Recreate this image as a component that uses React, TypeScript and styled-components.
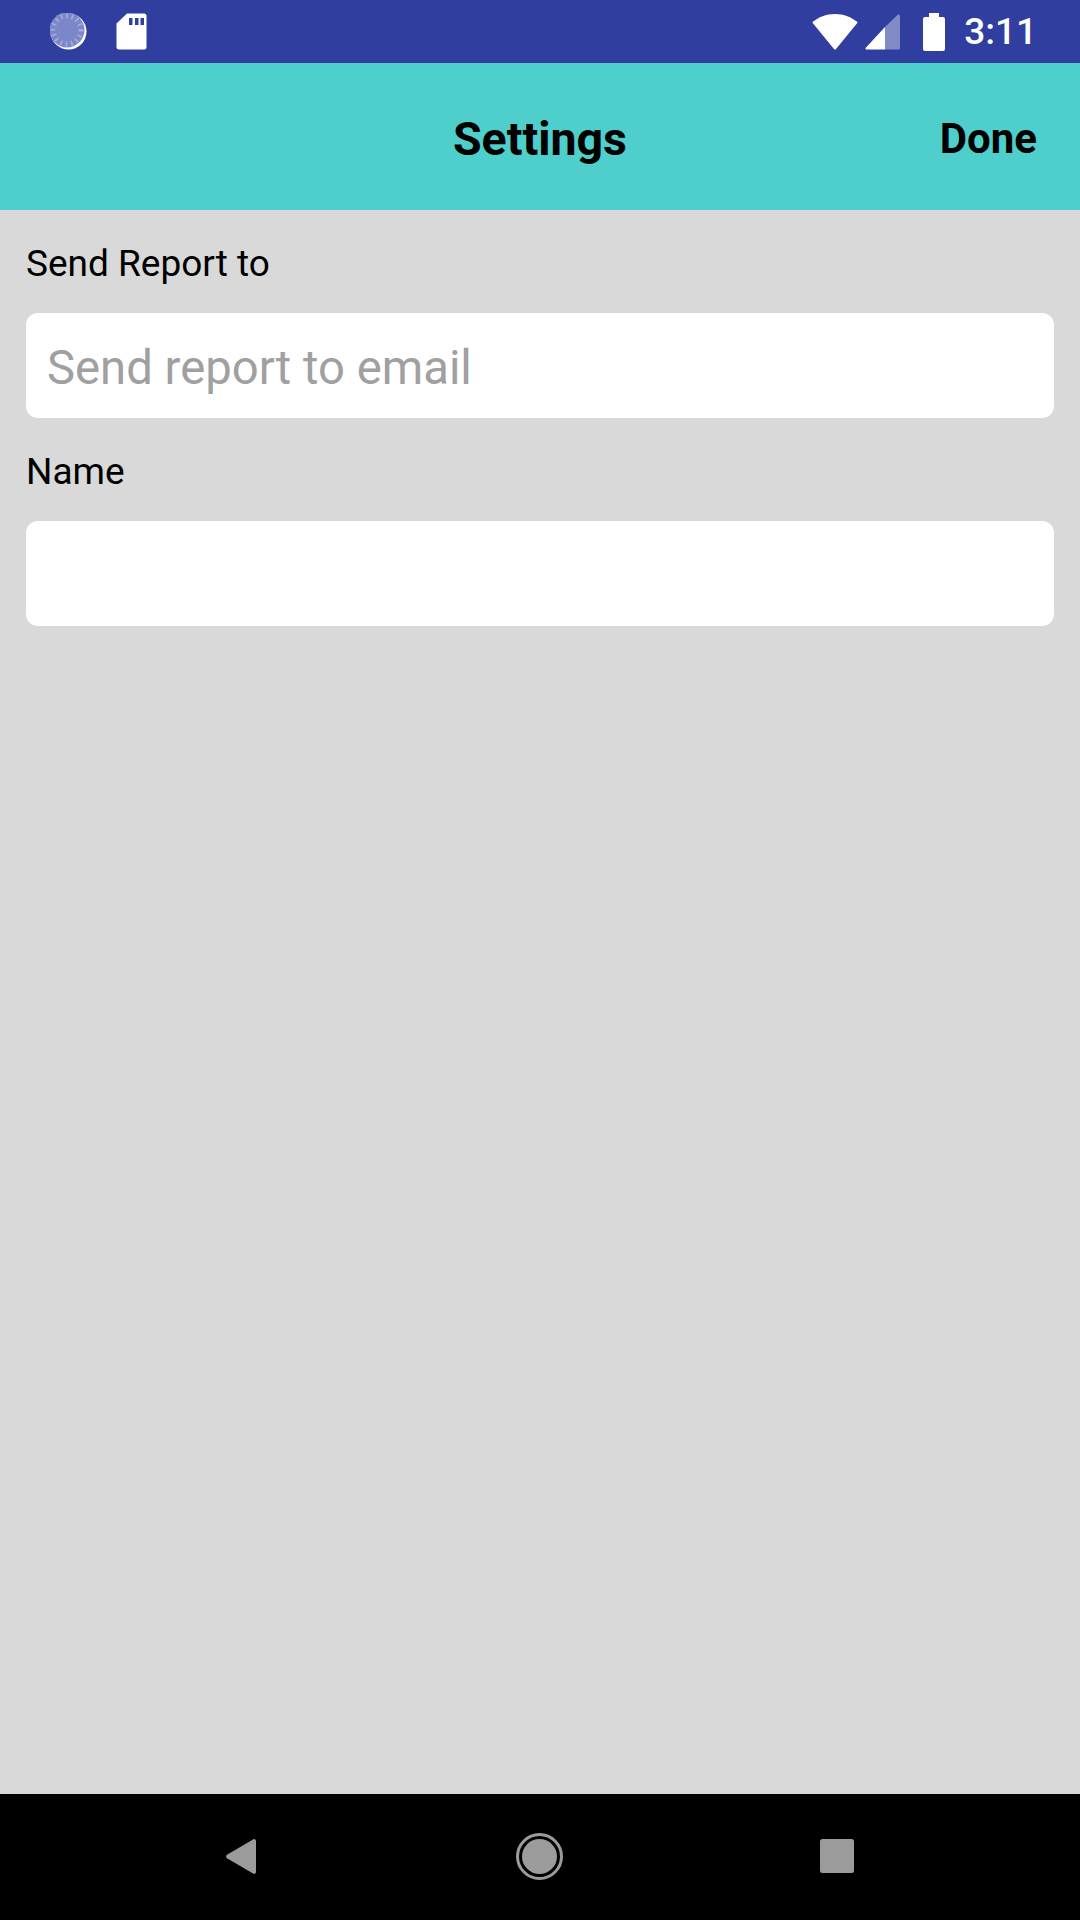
import React from "react";
import styled, { createGlobalStyle } from "styled-components";

const Global = createGlobalStyle`
  html, body { margin: 0; padding: 0; }
  body { font-family: Roboto, "Liberation Sans", sans-serif; }
`;

const Screen = styled.div`
  width: 1080px;
  height: 1920px;
  display: flex;
  flex-direction: column;
  background: #d9d9d9;
  overflow: hidden;
`;

const StatusBar = styled.div`
  height: 63px;
  flex: none;
  background: #303f9f;
  display: flex;
  align-items: center;
  justify-content: space-between;
  padding: 0 43px 0 50px;
  box-sizing: border-box;
`;

const StatusGroup = styled.div<{ $gap: number }>`
  display: flex;
  align-items: center;
  gap: ${(p) => p.$gap}px;
`;

const Clock = styled.span`
  color: #fff;
  font-size: 37px;
  font-weight: 500;
  line-height: 65px;
  margin-left: 19px;
`;

const Header = styled.header`
  height: 147px;
  flex: none;
  background: #4fcfcb;
  display: grid;
  grid-template-columns: 1fr auto 1fr;
  align-items: center;
  padding: 4px 43px 0;
  box-sizing: border-box;
`;

const Title = styled.h1`
  grid-column: 2;
  margin: 0;
  font-size: 46.5px;
  font-weight: 700;
  color: #000;
`;

const DoneButton = styled.button`
  grid-column: 3;
  justify-self: end;
  border: 0;
  padding: 0;
  background: none;
  font-family: inherit;
  font-size: 42px;
  font-weight: 700;
  color: #000;
`;

const Main = styled.main`
  flex: 1;
  display: flex;
  flex-direction: column;
  padding: 0 26px;
`;

const FieldLabel = styled.label`
  display: block;
  height: 103px;
  line-height: 107px;
  font-size: 37px;
  color: #000;
`;

const TextField = styled.input`
  display: block;
  box-sizing: border-box;
  width: 100%;
  height: 105px;
  border: 0;
  border-radius: 12px;
  background: #fff;
  padding: 5px 21px 0;
  font-family: inherit;
  font-size: 47.25px;
  color: #000;
  outline: none;
  &::placeholder {
    color: #a0a0a0;
    opacity: 1;
  }
`;

const NavBar = styled.nav`
  height: 126px;
  flex: none;
  background: #000;
  display: flex;
  align-items: center;
  justify-content: center;
  padding: 0 2px 2px 0;
  box-sizing: border-box;
`;

const NavSlot = styled.div`
  width: 298px;
  display: flex;
  justify-content: center;
  align-items: center;
`;

export default function App() {
  return (
    <Screen>
      <Global />
      <StatusBar>
        <StatusGroup $gap={29}>
          <svg width="37" height="37" viewBox="0 0 37 37">
            <circle cx="18.5" cy="18.5" r="18" fill="#fff" />
            <circle cx="17" cy="17" r="17.5" fill="#7b87c9" />
            <circle cx="17" cy="17" r="14" fill="none" stroke="#a5addb" strokeWidth="5" strokeDasharray="1.6 3.8" />
          </svg>
          <svg width="31" height="37" viewBox="0 0 31 37">
            <path
              fillRule="evenodd"
              fill="#fff"
              d="M11 0.5H28a2.5 2.5 0 0 1 2.5 2.5V34a2.5 2.5 0 0 1-2.5 2.5H3A2.5 2.5 0 0 1 .5 34V10.5ZM13 5V12H16.5V5ZM19 5V12H22.5V5ZM24.5 5V12H28V5Z"
            />
          </svg>
        </StatusGroup>
        <StatusGroup $gap={0}>
          <svg width="46" height="36" viewBox="0 0 45 36" style={{ marginRight: 7, marginLeft: -3 }}>
            <path fill="#fff" d="M22.5 0C13.5 0 6 3.2.4 7.8a1 1 0 0 0 0 1.4L21.5 35a1.3 1.3 0 0 0 2 0L44.6 9.2a1 1 0 0 0 0-1.4C39 3.2 31.5 0 22.5 0Z" />
          </svg>
          <svg width="35" height="36" viewBox="0 0 35 36" style={{ marginRight: 23 }}>
            <path fill="#fff" fillOpacity="0.4" d="M33 0.5a1.5 1.5 0 0 1 2 1.5V34a1.5 1.5 0 0 1-1.5 1.5H20V13Z" />
            <path fill="#fff" d="M20 13V35.5H1.5A1 1 0 0 1 .8 33.8Z" />
          </svg>
          <svg width="22" height="38" viewBox="0 0 22 38">
            <path fill="#fff" d="M6 0H16V4H20a2 2 0 0 1 2 2V36a2 2 0 0 1-2 2H2a2 2 0 0 1-2-2V6a2 2 0 0 1 2-2H6Z" />
          </svg>
          <Clock>3:11</Clock>
        </StatusGroup>
      </StatusBar>
      <Header>
        <Title>Settings</Title>
        <DoneButton>Done</DoneButton>
      </Header>
      <Main>
        <FieldLabel>Send Report to</FieldLabel>
        <TextField placeholder="Send report to email" />
        <FieldLabel>Name</FieldLabel>
        <TextField />
      </Main>
      <NavBar>
        <NavSlot>
          <svg width="30" height="35" viewBox="0 0 30 35">
            <path fill="#9b9b9b" d="M30 2V33a2 2 0 0 1-3 1.6L1 19.2a2 2 0 0 1 0-3.4L27 .4A2 2 0 0 1 30 2Z" />
          </svg>
        </NavSlot>
        <NavSlot>
          <svg width="47" height="47" viewBox="0 0 47 47">
            <circle cx="23.5" cy="23.5" r="22" fill="none" stroke="#9b9b9b" strokeWidth="3" />
            <circle cx="23.5" cy="23.5" r="17.5" fill="#9b9b9b" />
          </svg>
        </NavSlot>
        <NavSlot>
          <svg width="34" height="34" viewBox="0 0 34 34">
            <rect width="34" height="34" rx="2.5" fill="#9b9b9b" />
          </svg>
        </NavSlot>
      </NavBar>
    </Screen>
  );
}
